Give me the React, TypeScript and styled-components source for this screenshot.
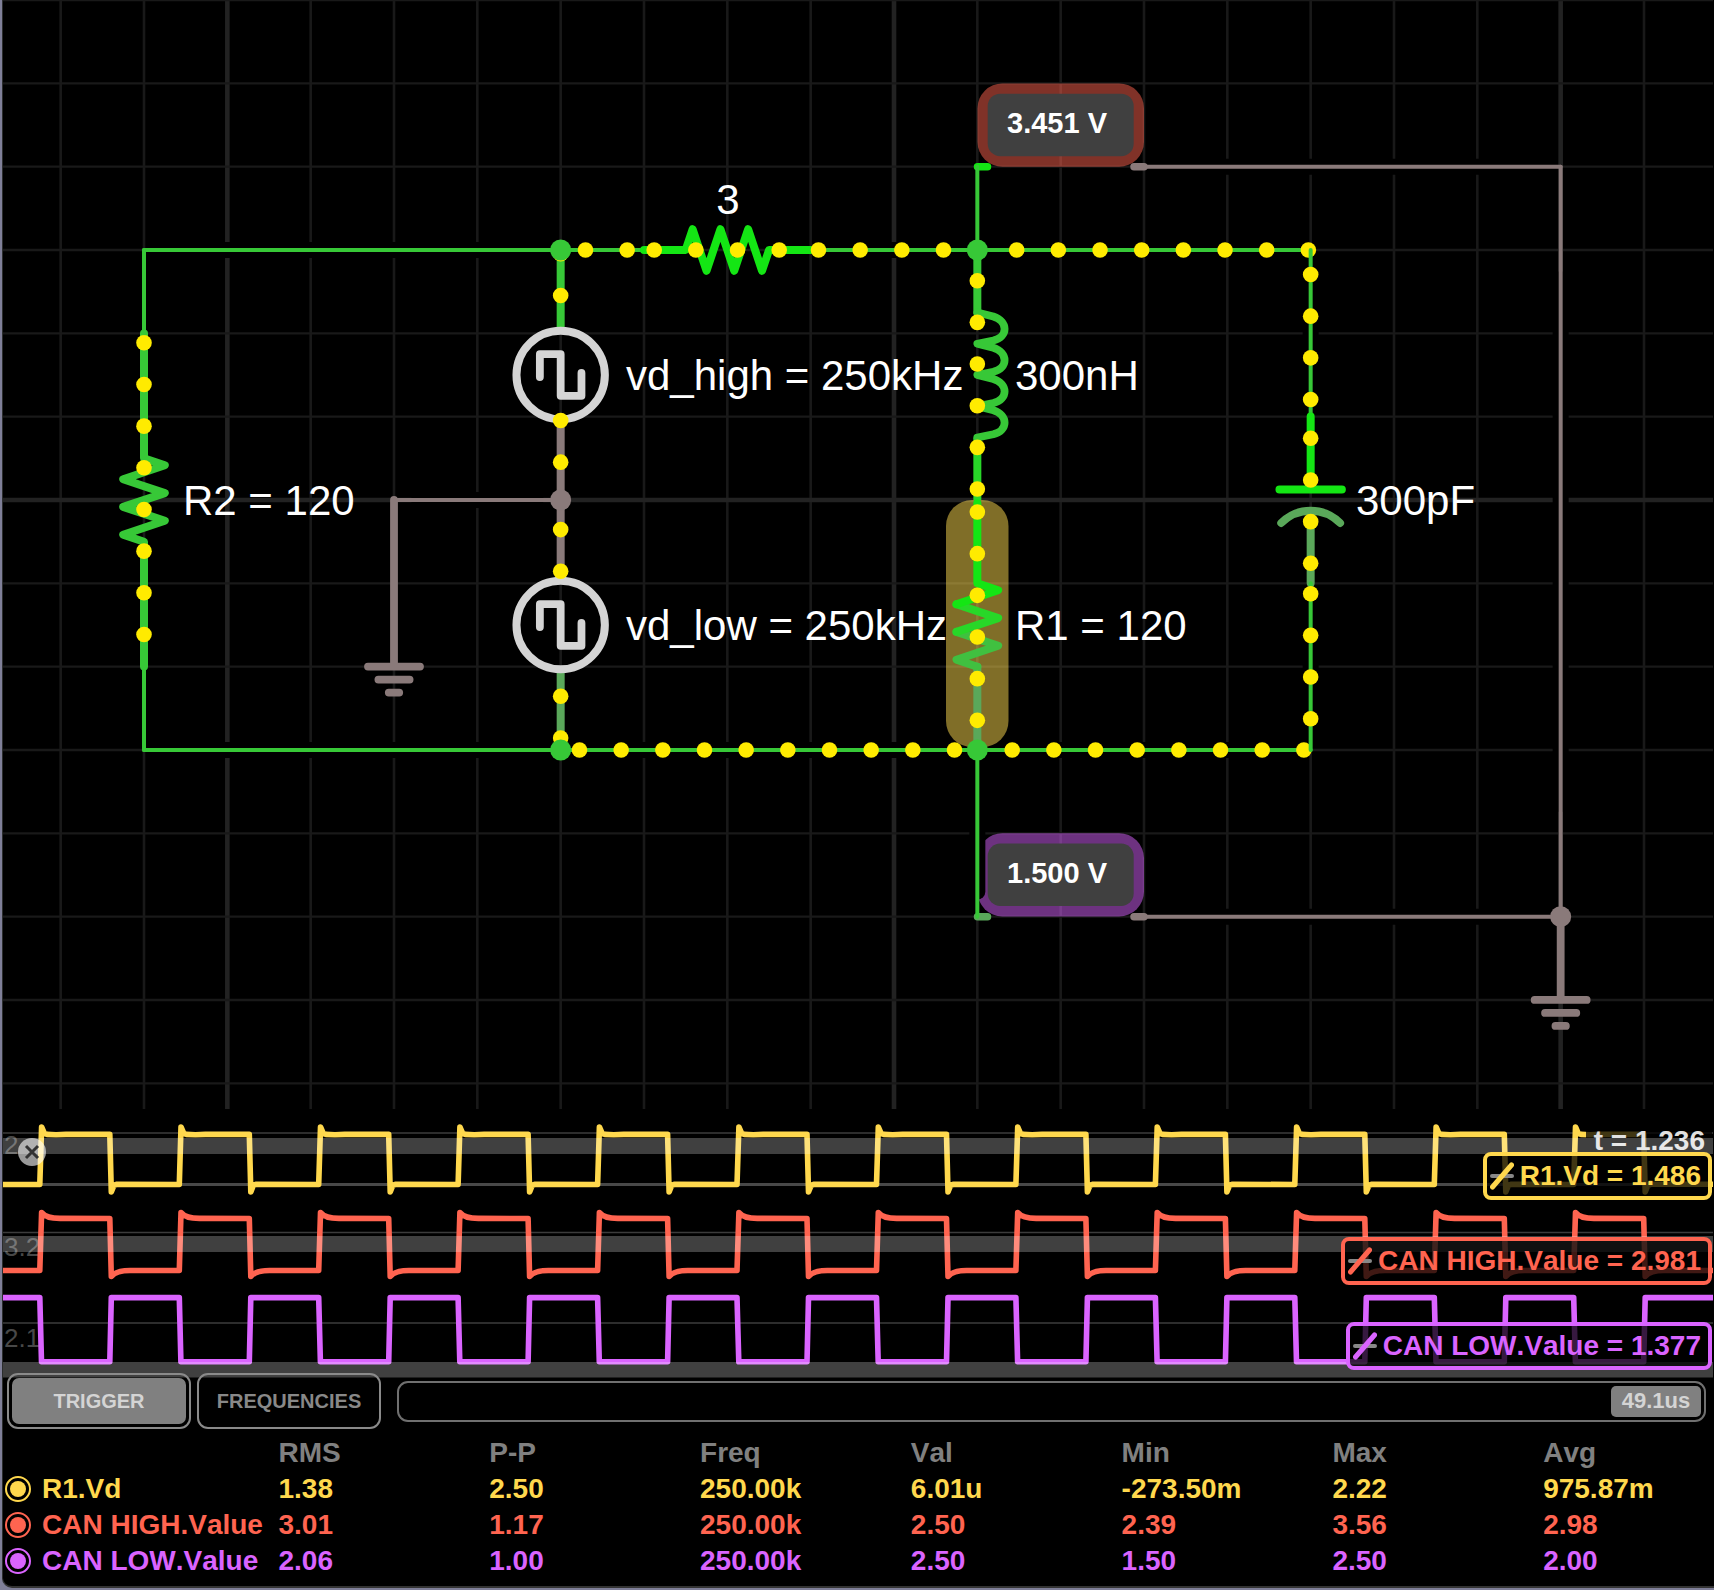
import React, { useState } from "react";
import styled, { createGlobalStyle } from "styled-components";

const palette = {
  yellow: "#ffd84d",
  red: "#ff6450",
  purple: "#da64ff",
  wire: "#37c837",
  bright: "#14e614",
  mid: "#28d728",
  dim: "#5aa85a",
  ground: "#8a7a7a",
  symbol: "#d4d4d4",
  charge: "#ffeb00",
  grey: "#808080",
};

const GlobalStyle = createGlobalStyle`
  *, *::before, *::after { box-sizing: border-box; }
  body {
    margin: 0;
    background: #7f7f98;
    font-family: "Liberation Sans", Arial, Helvetica, sans-serif;
    font-kerning: none;
    color: #fff;
  }
`;

const Frame = styled.main`
  position: relative;
  overflow: hidden;
  margin: 0 0 2px 2px;
  padding-bottom: 7px;
  border-left: 1px solid #2b2d2d;
  border-bottom: 2px solid #333;
  border-radius: 0 0 0 10px;
  background: #000;
`;

const Schematic = styled.svg`
  display: block;
  width: 100%;
  height: auto;
`;

const PartLabel = styled.text`
  font-size: 42px;
  fill: #fff;
`;

const MeterLabel = styled.text`
  font-size: 29px;
  font-weight: 700;
  fill: #fff;
`;

/* ---------- schematic ---------- */

const CELL = 250 / 3;
const STEP = CELL / 2;
const col = (n: number) => 182 / 3 + n * CELL;
const row = (n: number) => n * CELL;

function Grid() {
  const columns = Array.from({ length: 20 }, (_, n) => n);
  const rows = Array.from({ length: 14 }, (_, n) => n);
  return (
    <g>
      {columns.map((n) => (
        <line key={`c${n}`} x1={col(n)} x2={col(n)} y1={0} y2={1109}
          stroke={n % 8 === 2 ? "#222" : "#191919"} strokeWidth={n % 8 === 2 ? 4.6 : 2.6} />
      ))}
      {rows.map((n) => (
        <line key={`r${n}`} x1={0} x2={1713} y1={row(n)} y2={row(n)}
          stroke={n === 6 ? "#222" : "#191919"} strokeWidth={n === 6 ? 4.6 : 2.4} />
      ))}
    </g>
  );
}

type WireProps = { from: [number, number]; to: [number, number]; color?: string };

function Wire({ from, to, color = palette.wire }: WireProps) {
  const [x1, y1] = [col(from[0]), row(from[1])];
  const [x2, y2] = [col(to[0]), row(to[1])];
  const dx = (x2 - x1) * 0.15;
  const dy = (y2 - y1) * 0.15;
  return (
    <g strokeLinecap="round">
      <line x1={x1 + dx} y1={y1 + dy} x2={x2 - dx} y2={y2 - dy} stroke="#000" strokeWidth={16} />
      <line x1={x1} y1={y1} x2={x2} y2={y2} stroke={color} strokeWidth={4} />
    </g>
  );
}

type ChargesProps = { x: number; y: number; count: number; vertical?: boolean };

function Charges({ x, y, count, vertical }: ChargesProps) {
  return (
    <g fill={palette.charge}>
      {Array.from({ length: count }, (_, i) => (
        <circle key={i} r={7.8} cx={vertical ? x : x + i * STEP} cy={vertical ? y + i * STEP : y} />
      ))}
    </g>
  );
}

function Node({ at, color = palette.wire }: { at: [number, number]; color?: string }) {
  return <circle cx={col(at[0])} cy={row(at[1])} r={10.5} fill={color} />;
}

function Source({ x, y, top, bottom }: { x: number; y: number; top: string; bottom: string }) {
  return (
    <g transform={`translate(${x} ${y})`} fill="none" strokeWidth={8}>
      <path d="M0 -125 V-44" stroke={top} />
      <path d="M0 44 V125" stroke={bottom} />
      <circle r={44.2} stroke={palette.symbol} />
      <path d="M-20.8 2 V-20.8 H0 V20.8 H20.8 V-2" stroke={palette.symbol} strokeWidth={7.8}
        strokeLinecap="round" strokeLinejoin="round" />
    </g>
  );
}

function Ground({ x, y, stem }: { x: number; y: number; stem: number }) {
  return (
    <path d={`M${x} ${y} v${stem} M${x - 26} ${y + stem} h52 M${x - 15.6} ${y + stem + 13} h31.2 M${x - 5.2} ${y + stem + 26} h10.4`}
      stroke={palette.ground} strokeWidth={7.8} strokeLinecap="round" fill="none" />
  );
}

type MeterProps = { y: number; color: string; value: string };

function MeterBody({ y, color, value }: MeterProps) {
  return (
    <g>
      <rect x={977.5} y={y} width={166.5} height={83.3} rx={25} fill={color} fillOpacity={0.5} />
      <rect x={987.7} y={y + 10.3} width={146} height={62.5} rx={12.5} fill="#404040" />
      <MeterLabel x={1007} y={y + 50}>{value}</MeterLabel>
    </g>
  );
}

function MeterLeads({ y, lead }: { y: number; lead: string }) {
  return (
    <g strokeWidth={7.5} strokeLinecap="round">
      <path d={`M977.5 ${y} h10`} stroke={lead} />
      <path d={`M1134 ${y} h10`} stroke={palette.ground} />
    </g>
  );
}

const coil = "M0 0 L16 4 C31 9 31 24 16 28 L0 31.25 L16 35.25 C31 40.25 31 55.25 16 59.25 L0 62.5 L16 66.5 C31 71.5 31 86.5 16 90.5 L0 93.75 L16 97.75 C31 102.75 31 117.75 16 121.75 L0 125";

function Circuit() {
  return (
    <Schematic viewBox="3 0 1711 1109" role="img" aria-label="CAN bus termination circuit">
      <Grid />
      <rect x={946} y={500} width={62.5} height={247} rx={26} fill="#ffdc50" fillOpacity={0.5} />
      <MeterBody y={83.4} color={palette.red} value="3.451 V" />
      <MeterBody y={833.2} color={palette.purple} value="1.500 V" />

      {/* R2, on the left */}
      <g transform={`translate(${col(1)} ${row(6)})`} fill="none" stroke={palette.wire} strokeWidth={8}
        strokeLinecap="round" strokeLinejoin="round">
        <path d="M0 -166.6 V-41.7 L20.8 -34.7 L-20.8 -20.8 L20.8 -6.9 L-20.8 6.9 L20.8 20.8 L-20.8 34.7 L0 41.7 V166.6" />
      </g>
      <Charges vertical x={col(1)} y={342.8} count={8} />

      {/* Signal sources */}
      <Source x={col(6)} y={375} top={palette.wire} bottom={palette.ground} />
      <Source x={col(6)} y={625} top={palette.ground} bottom={palette.dim} />
      <Charges vertical x={col(6)} y={253.8} count={2} />
      <Charges vertical x={col(6)} y={420.5} count={2} />
      <Charges vertical x={col(6)} y={529.6} count={2} />
      <Charges vertical x={col(6)} y={696.3} count={2} />

      {/* Outer wires */}
      <Wire from={[1, 3]} to={[6, 3]} />
      <Wire from={[1, 3]} to={[1, 4]} />
      <Wire from={[1, 8]} to={[1, 9]} />
      <Wire from={[1, 9]} to={[6, 9]} />
      <Wire from={[6, 3]} to={[7, 3]} />
      <Wire from={[9, 3]} to={[11, 3]} />
      <Wire from={[11, 3]} to={[15, 3]} />
      <Wire from={[6, 9]} to={[11, 9]} />
      <Wire from={[11, 9]} to={[15, 9]} />
      <Wire from={[4, 6]} to={[6, 6]} color={palette.ground} />
      <Ground x={col(4)} y={row(6)} stem={166.6} />

      {/* Series resistor */}
      <g transform={`translate(${col(8)} ${row(3)})`} fill="none" stroke={palette.bright} strokeWidth={8}
        strokeLinecap="round" strokeLinejoin="round">
        <path d="M-83.3 0 H-41.7 L-34.7 -20.8 L-20.8 20.8 L-6.9 -20.8 L6.9 20.8 L20.8 -20.8 L34.7 20.8 L41.7 0 H83.3" />
      </g>
      <Charges x={585.5} y={row(3)} count={2} />
      <Charges x={654.2} y={row(3)} count={4} />
      <Charges x={818.5} y={row(3)} count={4} />
      <Charges x={1016.7} y={row(3)} count={8} />
      <Charges x={579.5} y={row(9)} count={10} />
      <Charges x={1012.2} y={row(9)} count={8} />

      {/* Inductor and R1 */}
      <g fill="none" strokeWidth={8} strokeLinecap="round" strokeLinejoin="round">
        <path d={`M${col(11)} ${row(3)} V312.5`} stroke={palette.wire} />
        <path d={`M${col(11)} 437.5 V500`} stroke={palette.mid} strokeLinecap="butt" />
        <path d={coil} transform={`translate(${col(11)} 312.5)`} stroke={palette.wire} strokeWidth={7.8} />
        <g transform={`translate(${col(11)} 625)`}>
          <path d="M0 41.7 V125" stroke={palette.dim} />
          <path d="M-20.8 6.9 L20.8 20.8 L-20.8 34.7 L0 41.7" stroke="#40c040" />
          <path d="M-20.8 -20.8 L20.8 -6.9 L-20.8 6.9" stroke={palette.mid} />
          <path d="M0 -122 V-41.7 L20.8 -34.7 L-20.8 -20.8" stroke={palette.bright} />
        </g>
      </g>
      <Charges vertical x={col(11)} y={280.7} count={6} />
      <Charges vertical x={col(11)} y={512} count={6} />

      {/* Capacitor branch */}
      <Wire from={[15, 3]} to={[15, 5]} />
      <g fill="none" strokeWidth={8} strokeLinecap="round">
        <path d={`M${col(15)} 416.6 V489.5 M${col(15) - 31.2} 489.5 h62.4`} stroke={palette.bright} />
        <path d={`M${col(15)} 511 V583`} stroke={palette.dim} />
        <path d={`M${col(15) - 29.5} 523 a41.7 41.7 0 0 1 59 0`} stroke={palette.dim} strokeWidth={7.8} />
      </g>
      <Wire from={[15, 7]} to={[15, 9]} />
      <Charges vertical x={col(15)} y={274.5} count={4} />
      <Charges vertical x={col(15)} y={438.3} count={4} />
      <Charges vertical x={col(15)} y={593.7} count={4} />

      {/* Meter connections */}
      <MeterLeads y={row(2)} lead={palette.bright} />
      <MeterLeads y={row(11)} lead={palette.dim} />
      <Wire from={[11, 2]} to={[11, 3]} />
      <Wire from={[11, 9]} to={[11, 11]} />
      <Wire from={[13, 2]} to={[18, 2]} color={palette.ground} />
      <Wire from={[13, 11]} to={[18, 11]} color={palette.ground} />
      <Wire from={[18, 2]} to={[18, 11]} color={palette.ground} />
      <Ground x={col(18)} y={row(11)} stem={83.3} />

      <Node at={[6, 3]} />
      <Node at={[11, 3]} />
      <Node at={[6, 9]} />
      <Node at={[11, 9]} />
      <Node at={[6, 6]} color={palette.ground} />
      <Node at={[18, 11]} color={palette.ground} />

      <PartLabel x={728} y={214} textAnchor="middle">3</PartLabel>
      <PartLabel x={183} y={515}>R2 = 120</PartLabel>
      <PartLabel x={626} y={390}>vd_high = 250kHz</PartLabel>
      <PartLabel x={626} y={640}>vd_low = 250kHz</PartLabel>
      <PartLabel x={1015} y={390}>300nH</PartLabel>
      <PartLabel x={1015} y={640}>R1 = 120</PartLabel>
      <PartLabel x={1356} y={515}>300pF</PartLabel>
    </Schematic>
  );
}

/* ---------- oscilloscope ---------- */

const Scope = styled.section`
  position: relative;
  margin-bottom: -5px;
`;

const Plot = styled.svg`
  display: block;
  width: 100%;
  height: auto;
`;

const BandLayer = styled(Plot)`
  position: absolute;
  inset: 0;
  pointer-events: none;
`;

const AxisLabel = styled.text`
  font-size: 26px;
  fill: #484848;
`;

const TimeLabel = styled.output`
  position: absolute;
  top: 18px;
  right: 2px;
  padding: 0 7px 0 8px;
  background: rgba(0, 0, 0, 0.75);
  color: #e0e0e0;
  font-size: 28px;
  font-weight: 700;
  line-height: 28px;
`;

const Legend = styled.ul`
  position: absolute;
  top: 43px;
  right: 2px;
  display: flex;
  flex-direction: column;
  align-items: flex-end;
  gap: 37px;
  margin: 0;
  padding: 0;
  list-style: none;
`;

const LegendItem = styled.li<{ $color: string }>`
  display: flex;
  align-items: center;
  gap: 6px;
  padding: 0 7px 0 3px;
  border: 4px solid ${(p) => p.$color};
  border-radius: 8px;
  background: rgba(0, 0, 0, 0.75);
  color: ${(p) => p.$color};
  font-size: 28px;
  font-weight: 700;
  line-height: 40px;
  white-space: nowrap;
`;

const CloseButton = styled.button`
  position: absolute;
  top: 29px;
  left: 15px;
  display: flex;
  width: 28px;
  height: 28px;
  padding: 0;
  border: 0;
  border-radius: 50%;
  background: rgba(255, 255, 255, 0.6);
  cursor: pointer;
`;

const PERIOD = 139.45;

type Point = [number, number];

function tracePath(start: number, cycle: Point[], smooth?: (k: number) => string): string {
  let d = `M0 ${start}`;
  for (let k = 0; k < 12; k += 1) {
    const shift = k * PERIOD;
    d += smooth
      ? smooth(shift)
      : cycle.map(([x, y]) => ` L${(x + shift).toFixed(1)} ${y}`).join("");
  }
  return `${d} H1713`;
}

const yellowTrace = tracePath(1184.5, [
  [39.8, 1184.5], [41.6, 1127], [44.5, 1133.6], [47, 1134.4], [56, 1134.8], [66, 1134.4],
  [109.8, 1134.4], [111.3, 1192], [114, 1185.2], [117, 1184.3],
]);

const redTrace = tracePath(1270.5, [], (s) => {
  const x = (n: number) => (n + s).toFixed(1);
  return ` L${x(39.8)} 1270.5 L${x(41.6)} 1212.5 Q${x(46)} 1218.4 ${x(60)} 1218.4 L${x(109.8)} 1218.5`
    + ` L${x(111.3)} 1276.5 Q${x(116)} 1270.6 ${x(130)} 1270.5`;
});

const purpleTrace = tracePath(1297.6, [
  [39.8, 1297.6], [41.5, 1361.8], [109.8, 1361.8], [111.3, 1297.6],
]);

const readouts = [
  { text: "R1.Vd = 1.486", color: palette.yellow },
  { text: "CAN HIGH.Value = 2.981", color: palette.red },
  { text: "CAN LOW.Value = 1.377", color: palette.purple },
];

function Oscilloscope() {
  return (
    <Scope>
      <Plot viewBox="3 1109 1711 269" role="img" aria-label="Voltage traces over time">
        <g fill="none" stroke="#3c3c3c" strokeWidth={1.6}>
          <path d="M0 1133 H1713 M0 1232.5 H1713 M0 1323 H1713" />
          <path d="M0 1184.5 H1713" stroke="#484848" strokeWidth={3} />
        </g>
        <AxisLabel x={4} y={1154}>2</AxisLabel>
        <AxisLabel x={4} y={1256}>3.2</AxisLabel>
        <AxisLabel x={4} y={1347}>2.1</AxisLabel>
        <g fill="none" strokeWidth={5.6} strokeLinejoin="round">
          <path d={yellowTrace} stroke={palette.yellow} />
          <path d={redTrace} stroke={palette.red} />
          <path d={purpleTrace} stroke={palette.purple} />
        </g>
      </Plot>
      <TimeLabel>t = 1.236</TimeLabel>
      <BandLayer viewBox="3 1109 1711 269" aria-hidden="true">
        <g fill="#fff" fillOpacity={0.25}>
          <rect x={0} y={1138} width={1713} height={16} />
          <rect x={0} y={1236} width={1713} height={16} />
          <rect x={0} y={1362} width={1713} height={15.5} />
        </g>
      </BandLayer>
      <Legend>
        {readouts.map((r) => (
          <LegendItem key={r.text} $color={r.color}>
            <svg width="24" height="32" viewBox="0 0 24 32" aria-hidden="true">
              <path d="M2 16 H22" stroke="#888" strokeWidth={4} strokeLinecap="round" />
              <path d="M2.5 27 L21.5 5" stroke={r.color} strokeWidth={5} strokeLinecap="round" />
            </svg>
            {r.text}
          </LegendItem>
        ))}
      </Legend>
      <CloseButton type="button" aria-label="Close scope">
        <svg width="28" height="28" viewBox="0 0 28 28" aria-hidden="true">
          <path d="M8 8 L20 20 M20 8 L8 20" stroke="#333" strokeWidth={3} />
        </svg>
      </CloseButton>
    </Scope>
  );
}

/* ---------- controls ---------- */

const Controls = styled.div`
  position: relative;
  display: flex;
  align-items: center;
  gap: 6px;
  padding: 0 8px 0 4px;
`;

const ModeButton = styled.button`
  flex: none;
  width: 184px;
  height: 56px;
  padding: 3px;
  border: 2px solid #8a8a8a;
  border-radius: 11px;
  background: transparent;
  font: 700 20px "Liberation Sans", Arial, sans-serif;
  cursor: pointer;
`;

const ModeFace = styled.span<{ $active: boolean }>`
  display: flex;
  align-items: center;
  justify-content: center;
  height: 100%;
  border-radius: 7px;
  background: ${(p) => (p.$active ? palette.grey : "transparent")};
  color: ${(p) => (p.$active ? "#d4d4d4" : "#888")};
`;

const TimeSlider = styled.label`
  position: relative;
  flex: 1;
  display: flex;
  justify-content: flex-end;
  height: 41px;
  margin-left: 10px;
  padding: 3px;
  border: 2px solid #707070;
  border-radius: 11px;
`;

const SliderInput = styled.input`
  position: absolute;
  inset: 0;
  width: 100%;
  height: 100%;
  margin: 0;
  opacity: 0;
  cursor: pointer;
`;

const SliderThumb = styled.span`
  display: flex;
  align-items: center;
  justify-content: center;
  width: 90px;
  border-radius: 5px;
  background: ${palette.grey};
  color: #d4d4d4;
  font-size: 22px;
  font-weight: 700;
`;

/* ---------- measurements ---------- */

const Measurements = styled.table`
  width: 100%;
  margin-top: 6px;
  border-collapse: collapse;
  table-layout: fixed;
  font-size: 28px;
  font-weight: 700;
  line-height: 36px;
  text-align: left;
  white-space: nowrap;
`;

const NameColumn = styled.col`
  width: 16.1%;
`;

const ValueColumn = styled.col`
  width: 12.32%;
`;

const HeadCell = styled.th`
  height: 36px;
  padding: 0;
  color: ${palette.grey};
`;

const SignalRow = styled.tr<{ $color: string }>`
  color: ${(p) => p.$color};
`;

const SignalName = styled.th`
  height: 36px;
  padding: 0 0 0 2px;
`;

const SignalLabel = styled.label`
  display: flex;
  align-items: center;
  gap: 11px;
`;

const SignalToggle = styled.input`
  flex: none;
  display: grid;
  place-items: center;
  appearance: none;
  width: 26px;
  height: 26px;
  margin: 0;
  border: 2px solid currentColor;
  border-radius: 50%;
  color: inherit;

  &:checked::before {
    content: "";
    width: 16px;
    height: 16px;
    border-radius: 50%;
    background: currentColor;
  }
`;

const ValueCell = styled.td`
  height: 36px;
  padding: 0;
`;

const headings = ["RMS", "P-P", "Freq", "Val", "Min", "Max", "Avg"];

const signals = [
  { name: "R1.Vd", color: palette.yellow, values: ["1.38", "2.50", "250.00k", "6.01u", "-273.50m", "2.22", "975.87m"] },
  { name: "CAN HIGH.Value", color: palette.red, values: ["3.01", "1.17", "250.00k", "2.50", "2.39", "3.56", "2.98"] },
  { name: "CAN LOW.Value", color: palette.purple, values: ["2.06", "1.00", "250.00k", "2.50", "1.50", "2.50", "2.00"] },
];

const modes = ["TRIGGER", "FREQUENCIES"];

export default function App() {
  const [mode, setMode] = useState("TRIGGER");
  return (
    <>
      <GlobalStyle />
      <Frame>
        <Circuit />
        <Oscilloscope />
        <Controls>
          {modes.map((m) => (
            <ModeButton key={m} type="button" aria-pressed={m === mode} onClick={() => setMode(m)}>
              <ModeFace $active={m === mode}>{m}</ModeFace>
            </ModeButton>
          ))}
          <TimeSlider>
            <SliderThumb>49.1us</SliderThumb>
            <SliderInput type="range" min={0} max={100} defaultValue={100} aria-label="Time span" />
          </TimeSlider>
        </Controls>
        <Measurements>
          <colgroup>
            <NameColumn />
            {headings.slice(0, -1).map((h) => <ValueColumn key={h} />)}
            <col />
          </colgroup>
          <thead>
            <tr>
              <HeadCell as="td" />
              {headings.map((h) => <HeadCell key={h} scope="col">{h}</HeadCell>)}
            </tr>
          </thead>
          <tbody>
            {signals.map((s) => (
              <SignalRow key={s.name} $color={s.color}>
                <SignalName scope="row">
                  <SignalLabel>
                    <SignalToggle type="checkbox" defaultChecked />
                    {s.name}
                  </SignalLabel>
                </SignalName>
                {s.values.map((v, i) => <ValueCell key={headings[i]}>{v}</ValueCell>)}
              </SignalRow>
            ))}
          </tbody>
        </Measurements>
      </Frame>
    </>
  );
}
